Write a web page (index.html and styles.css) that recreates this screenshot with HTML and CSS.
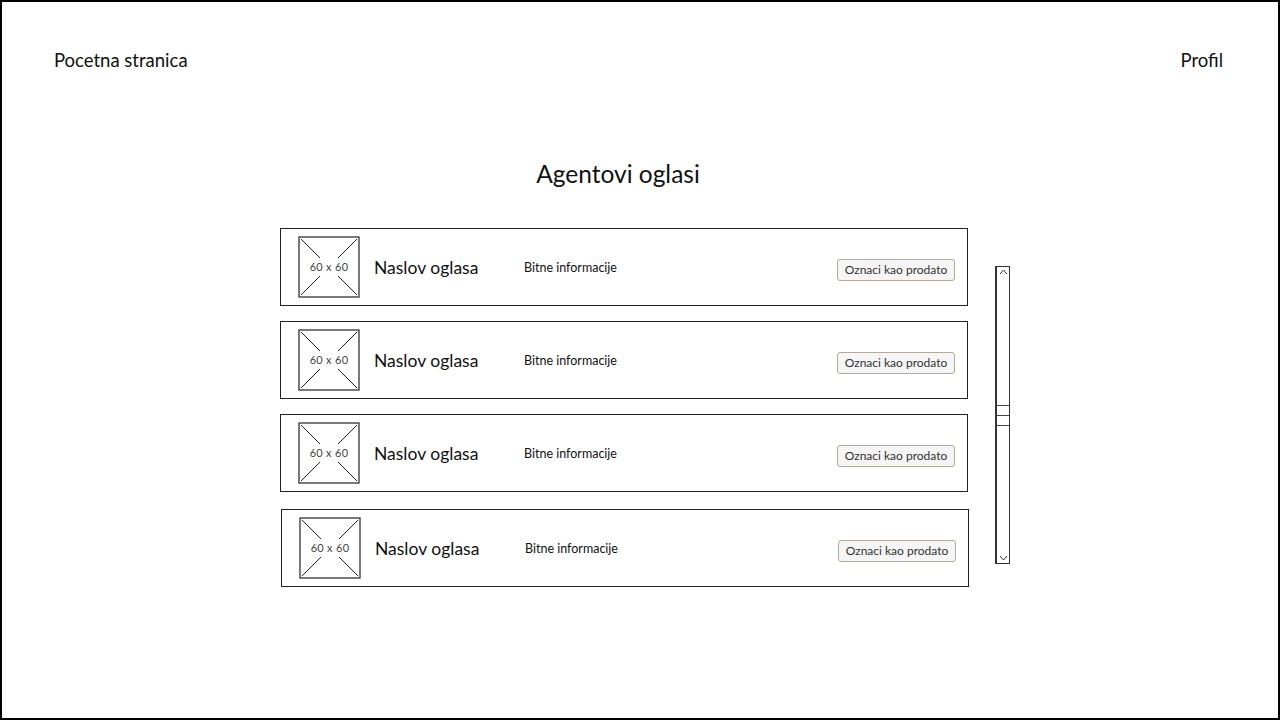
FILE: index.html
```html
<!DOCTYPE html>
<html lang="hr">
<head>
    <meta charset="UTF-8">
    <meta name="viewport" content="width=device-width, initial-scale=1.0">
    <title>Agentovi oglasi</title>
    <link rel="stylesheet" href="styles.css">
</head>
<body>
    <div class="frame">
        <!-- Navigacija -->
        <div class="nav">
            <a class="nav-link">Pocetna stranica</a>
            <a class="nav-link">Profil</a>
        </div>

        <div class="board">
            <div class="column">
                <h1 class="title">Agentovi oglasi</h1>

                <div class="ad-list">
                    <div class="ad-card">
                        <svg class="thumb" width="62" height="62" viewBox="0 0 62 62">
                            <rect x="1" y="1" width="60" height="60" fill="#fff" stroke="#333" stroke-width="1.3"/>
                            <line x1="3" y1="3" x2="22" y2="22" stroke="#222"/>
                            <line x1="59" y1="3" x2="40" y2="22" stroke="#222"/>
                            <line x1="3" y1="59" x2="22" y2="40" stroke="#222"/>
                            <line x1="59" y1="59" x2="40" y2="40" stroke="#222"/>
                            <text x="31" y="35" text-anchor="middle" class="thumb-text">60 x 60</text>
                        </svg>
                        <div class="ad-title">Naslov oglasa</div>
                        <div class="ad-info">Bitne informacije</div>
                        <button class="sold-btn">Oznaci kao prodato</button>
                    </div>

                    <div class="ad-card">
                        <svg class="thumb" width="62" height="62" viewBox="0 0 62 62">
                            <rect x="1" y="1" width="60" height="60" fill="#fff" stroke="#333" stroke-width="1.3"/>
                            <line x1="3" y1="3" x2="22" y2="22" stroke="#222"/>
                            <line x1="59" y1="3" x2="40" y2="22" stroke="#222"/>
                            <line x1="3" y1="59" x2="22" y2="40" stroke="#222"/>
                            <line x1="59" y1="59" x2="40" y2="40" stroke="#222"/>
                            <text x="31" y="35" text-anchor="middle" class="thumb-text">60 x 60</text>
                        </svg>
                        <div class="ad-title">Naslov oglasa</div>
                        <div class="ad-info">Bitne informacije</div>
                        <button class="sold-btn">Oznaci kao prodato</button>
                    </div>

                    <div class="ad-card">
                        <svg class="thumb" width="62" height="62" viewBox="0 0 62 62">
                            <rect x="1" y="1" width="60" height="60" fill="#fff" stroke="#333" stroke-width="1.3"/>
                            <line x1="3" y1="3" x2="22" y2="22" stroke="#222"/>
                            <line x1="59" y1="3" x2="40" y2="22" stroke="#222"/>
                            <line x1="3" y1="59" x2="22" y2="40" stroke="#222"/>
                            <line x1="59" y1="59" x2="40" y2="40" stroke="#222"/>
                            <text x="31" y="35" text-anchor="middle" class="thumb-text">60 x 60</text>
                        </svg>
                        <div class="ad-title">Naslov oglasa</div>
                        <div class="ad-info">Bitne informacije</div>
                        <button class="sold-btn">Oznaci kao prodato</button>
                    </div>

                    <div class="ad-card">
                        <svg class="thumb" width="62" height="62" viewBox="0 0 62 62">
                            <rect x="1" y="1" width="60" height="60" fill="#fff" stroke="#333" stroke-width="1.3"/>
                            <line x1="3" y1="3" x2="22" y2="22" stroke="#222"/>
                            <line x1="59" y1="3" x2="40" y2="22" stroke="#222"/>
                            <line x1="3" y1="59" x2="22" y2="40" stroke="#222"/>
                            <line x1="59" y1="59" x2="40" y2="40" stroke="#222"/>
                            <text x="31" y="35" text-anchor="middle" class="thumb-text">60 x 60</text>
                        </svg>
                        <div class="ad-title">Naslov oglasa</div>
                        <div class="ad-info">Bitne informacije</div>
                        <button class="sold-btn">Oznaci kao prodato</button>
                    </div>
                </div>
            </div>

            <!-- Scrollbar -->
            <div class="scrollbar">
                <svg class="arrow" width="13" height="10" viewBox="0 0 13 10">
                    <polyline points="3,7 6.5,3 10,7" fill="none" stroke="#333" stroke-width="1"/>
                </svg>
                <div class="grip">
                    <span></span>
                    <span></span>
                    <span></span>
                </div>
                <svg class="arrow" width="13" height="10" viewBox="0 0 13 10">
                    <polyline points="3,3 6.5,7 10,3" fill="none" stroke="#333" stroke-width="1"/>
                </svg>
            </div>
        </div>
    </div>
</body>
</html>
```

FILE: styles.css
```css
* {
    margin: 0;
    padding: 0;
    box-sizing: border-box;
    font-family: Lato, "Open Sans", sans-serif;
}

body {
    background-color: #fff;
    color: #111;
}

.frame {
    width: 1280px;
    height: 720px;
    border: 2px solid #000;
}

/* Navigacija */
.nav {
    display: flex;
    justify-content: space-between;
    padding: 47px 55px 0 52px;
}

.nav-link {
    font-size: 18.5px;
    line-height: 22px;
    color: #111;
}

/* Glavni dio */
.board {
    display: flex;
    padding-left: 278px;
}

.column {
    width: 688px;
}

.title {
    font-size: 24.5px;
    font-weight: normal;
    line-height: 30px;
    text-align: center;
    padding-right: 12px;
    margin-top: 88px;
    margin-bottom: 39px;
}

.ad-list {
    display: flex;
    flex-direction: column;
    gap: 15px;
}

.ad-card {
    display: flex;
    align-items: center;
    height: 78px;
    border: 1px solid #222;
    padding: 0 12px 0 17px;
}

.ad-card:last-child {
    margin-top: 2px;
    margin-left: 1px;
    margin-right: -1px;
}

.thumb {
    flex-shrink: 0;
}

.thumb-text {
    font-family: Lato, sans-serif;
    font-size: 11px;
    letter-spacing: 0.3px;
    fill: #444;
}

.ad-title {
    font-size: 17.5px;
    margin-left: 14px;
    width: 150px;
}

.ad-info {
    font-size: 12.5px;
    flex: 1;
}

.sold-btn {
    width: 118px;
    font-size: 12px;
    color: #333;
    height: 22px;
    padding: 0;
    background: #f5f5f5;
    border: 1px solid #b5ab9c;
    border-radius: 3px;
    margin-top: 5px;
}

/* Scrollbar */
.scrollbar {
    display: flex;
    flex-direction: column;
    justify-content: space-between;
    width: 15px;
    height: 298px;
    margin-top: 195px;
    margin-left: 27px;
    border: 1px solid #333;
    border-left-width: 2px;
}

.arrow {
    display: block;
}

.grip {
    display: flex;
    flex-direction: column;
    gap: 9px;
}

.grip span {
    display: block;
    height: 1px;
    background: #444;
}
```
